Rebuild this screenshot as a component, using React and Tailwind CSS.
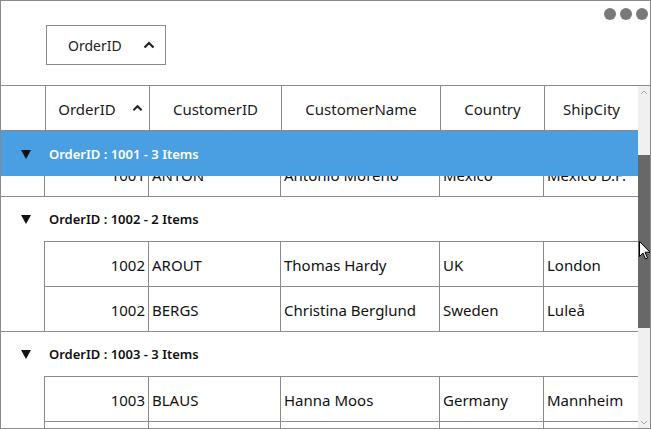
const LINE = 'border-[#8a8a8a]'

const columns = [
  { key: 'id', title: 'OrderID', w: 'w-[104px]', sorted: true },
  { key: 'cust', title: 'CustomerID', w: 'w-[132px]' },
  { key: 'name', title: 'CustomerName', w: 'w-[159px]' },
  { key: 'country', title: 'Country', w: 'w-[104px]' },
  { key: 'city', title: 'ShipCity', w: 'w-[93px]' },
]

const groups = [
  {
    id: 1001,
    count: 3,
    rows: [['1001', 'ANTON', 'Antonio Moreno', 'Mexico', 'México D.F.']],
  },
  {
    id: 1002,
    count: 2,
    rows: [
      ['1002', 'AROUT', 'Thomas Hardy', 'UK', 'London'],
      ['1002', 'BERGS', 'Christina Berglund', 'Sweden', 'Luleå'],
    ],
  },
  {
    id: 1003,
    count: 3,
    rows: [
      ['1003', 'BLAUS', 'Hanna Moos', 'Germany', 'Mannheim'],
      ['1003', 'BLONP', 'Frédérique Citeaux', 'France', 'Strasbourg'],
    ],
  },
]

function Caret({ className = '' }) {
  return (
    <svg viewBox="0 0 12 8" className={className} fill="none">
      <polyline points="1.5,6.5 6,2 10.5,6.5" stroke="#222" strokeWidth="2.2" />
    </svg>
  )
}

function Triangle() {
  return (
    <svg viewBox="0 0 10 9" className="w-[10px] h-[9px]">
      <polygon points="0,0 10,0 5,9" fill="#111" />
    </svg>
  )
}

function DataRow({ row }) {
  return (
    <div className="flex h-[45px] shrink-0">
      <div className={`w-[44px] shrink-0 border-r ${LINE}`} />
      <div className={`flex flex-1 border-t ${LINE}`}>
        {row.map((v, i) => (
          <div
            key={i}
            className={`${columns[i].w} shrink-0 flex items-center pt-[3px] ${i < 4 ? `border-r ${LINE}` : ''} ${
              i === 0 ? 'justify-end pr-[3px]' : 'pl-[3px]'
            } text-[15px] text-[#111] whitespace-nowrap overflow-hidden`}
          >
            {v}
          </div>
        ))}
      </div>
    </div>
  )
}

function GroupHeader({ group, active }) {
  return (
    <div
      className={`flex items-center pt-[2px] shrink-0 ${active ? 'bg-[#4a9fe2] text-white h-[45px]' : 'text-[#111] h-[44px]'}`}
    >
      <div className="w-[48px] shrink-0 flex justify-center pl-[2px] pb-[1px]">
        <Triangle />
      </div>
      <span className="text-[13px] font-semibold">
        OrderID : {group.id} - {group.count} Items
      </span>
    </div>
  )
}

export default function App() {
  return (
    <div
      className="relative w-[651px] h-[429px] border border-[#8a8a8a] bg-white overflow-hidden flex flex-col"
      style={{ fontFamily: '"Noto Sans", "Open Sans", sans-serif' }}
    >
      {/* group drop area */}
      <div className={`h-[85px] shrink-0 border-b ${LINE} relative`}>
        <div className="absolute right-[2px] top-[7px] flex gap-[4px]">
          <span className="w-[12px] h-[12px] rounded-full bg-[#7a7a7a]" />
          <span className="w-[12px] h-[12px] rounded-full bg-[#7a7a7a]" />
          <span className="w-[12px] h-[12px] rounded-full bg-[#7a7a7a]" />
        </div>
        <div className="ml-[45px] mt-[24px] w-[120px] h-[40px] border border-[#8a8a8a] flex items-center pl-[21px] pr-[10px]">
          <span className="text-[14px] text-[#222] flex-1">OrderID</span>
          <Caret className="w-[12px] h-[8px]" />
        </div>
      </div>

      <div className="flex flex-1 min-h-0">
        {/* grid */}
        <div className="w-[637px] shrink-0 flex flex-col overflow-hidden">
          <div className={`flex h-[45px] shrink-0 border-b ${LINE}`}>
            <div className={`w-[45px] shrink-0 border-r ${LINE}`} />
            {columns.map((c, i) => (
              <div
                key={c.key}
                className={`${c.w} shrink-0 flex items-center justify-center pt-[3px] ${
                  c.sorted ? 'gap-[16px] pl-[6px]' : ''
                } ${i < 4 ? `border-r ${LINE}` : ''} text-[15px] text-[#1a1a1a]`}
              >
                <span>{c.title}</span>
                {c.sorted && <Caret className="w-[11px] h-[8px] mb-[4px]" />}
              </div>
            ))}
          </div>

          {/* group 1001, scrolled under its header */}
          <div className={`shrink-0 flex flex-col border-b ${LINE}`}>
            <GroupHeader group={groups[0]} active />
            <div className="h-[20px] overflow-hidden flex flex-col justify-end">
              <DataRow row={groups[0].rows[0]} />
            </div>
          </div>

          {groups.slice(1).map((g) => (
            <div key={g.id} className={`shrink-0 flex flex-col border-b ${LINE}`}>
              <GroupHeader group={g} />
              {g.rows.map((r, i) => (
                <DataRow key={i} row={r} />
              ))}
            </div>
          ))}
        </div>

        {/* scrollbar */}
        <div className="w-[12px] shrink-0 bg-[#f0f0f0] flex flex-col items-center">
          <svg viewBox="0 0 8 5" className="w-[8px] h-[5px] mt-[4px]" fill="none">
            <polyline points="1,4 4,1 7,4" stroke="#a6a6a6" strokeWidth="1" />
          </svg>
          <div className="w-[12px] h-[173px] bg-[#686868] mt-[60px]" />
          <div className="flex-1" />
          <svg viewBox="0 0 8 5" className="w-[8px] h-[5px] mb-[3px]" fill="none">
            <polyline points="1,1 4,4 7,1" stroke="#a6a6a6" strokeWidth="1" />
          </svg>
        </div>
      </div>

      {/* mouse pointer */}
      <svg viewBox="0 0 12 19" className="absolute left-[638px] top-[240px] w-[12px] h-[19px]">
        <path d="M0.5,0.5 L0.5,15.5 L4,12 L6.5,18 L8.5,17 L6,11.2 L11,11.2 Z" fill="#fff" stroke="#000" strokeWidth="1" />
      </svg>
    </div>
  )
}
